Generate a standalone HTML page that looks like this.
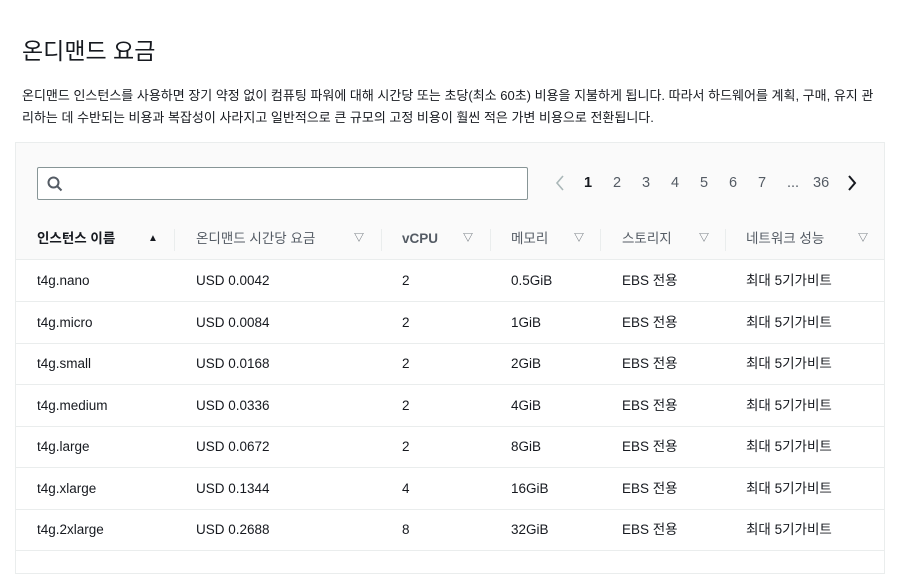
<!DOCTYPE html>
<html><head><meta charset="utf-8"><style>
body{margin:0;width:900px;height:560px;overflow:hidden;background:#fff;font-family:"Liberation Sans","Noto Sans CJK KR",sans-serif;color:#16191f;position:relative}
h1{position:absolute;left:22px;top:36px;margin:0;font-size:23px;line-height:30px;font-weight:400;color:#16191f}
.p{position:absolute;left:22px;top:85px;font-size:13px;line-height:22px;width:880px;white-space:nowrap;color:#16191f}
.box{position:absolute;left:15px;top:142px;width:868px;height:430px;border:1px solid #eaeded;background:#fff}
.top{position:absolute;left:0;top:0;width:868px;height:116px;background:#fafafa;border-bottom:1px solid #eaeded}
.search{position:absolute;left:21px;top:24px;width:489px;height:31px;border:1px solid #879596;border-radius:2px;background:#fff}
.pg{position:absolute;top:31px;font-size:14.5px;line-height:18px;color:#545b64}
.hd{position:absolute;top:87px;font-size:13.5px;line-height:18px;font-weight:bold;color:#16191f}
.ar{position:absolute;top:88px;font-size:10px;line-height:16px;color:#545b64}
.dv{position:absolute;top:86px;width:1px;height:22px;background:#eaeded}
.row{position:absolute;left:0;width:868px;border-bottom:1px solid #eaeded;height:41px}
.c{position:absolute;top:12px;font-size:13.5px;line-height:18px}
</style></head><body>
<h1>온디맨드 요금</h1>
<div class="p">온디맨드 인스턴스를 사용하면 장기 약정 없이 컴퓨팅 파워에 대해 시간당 또는 초당(최소 60초) 비용을 지불하게 됩니다. 따라서 하드웨어를 계획, 구매, 유지 관<br>리하는 데 수반되는 비용과 복잡성이 사라지고 일반적으로 큰 규모의 고정 비용이 훨씬 적은 가변 비용으로 전환됩니다.</div>
<div class="box">
<div class="top">
<div class="search"><svg width="16" height="16" style="position:absolute;left:9px;top:8px" viewBox="0 0 16 16"><circle cx="6.5" cy="6.5" r="5" fill="none" stroke="#545b64" stroke-width="2"/><path d="M10 10l4.5 4.5" stroke="#545b64" stroke-width="2"/></svg></div>
<svg style="position:absolute;left:538px;top:32px" width="12" height="16" viewBox="0 0 12 16"><path d="M9 1L3 8l6 7" fill="none" stroke="#aab7b8" stroke-width="1.6"/></svg>
<span class="pg" style="left:568px;color:#16191f;font-weight:bold">1</span>
<span class="pg" style="left:597px">2</span><span class="pg" style="left:626px">3</span><span class="pg" style="left:655px">4</span><span class="pg" style="left:684px">5</span><span class="pg" style="left:713px">6</span><span class="pg" style="left:742px">7</span><span class="pg" style="left:771px">...</span><span class="pg" style="left:797px">36</span>
<svg style="position:absolute;left:830px;top:32px" width="12" height="16" viewBox="0 0 12 16"><path d="M3 1l6 7-6 7" fill="none" stroke="#16191f" stroke-width="2"/></svg>
<span class="hd" style="left:21px">인스턴스 이름</span><span class="ar" style="left:132px;color:#16191f">▲</span><div class="dv" style="left:158px"></div>
<span class="hd" style="left:180px;font-weight:normal;color:#545b64">온디맨드 시간당 요금</span><span class="ar" style="left:338px">▽</span><div class="dv" style="left:365px"></div>
<span class="hd" style="left:386px;color:#545b64">vCPU</span><span class="ar" style="left:447px">▽</span><div class="dv" style="left:474px"></div>
<span class="hd" style="left:495px;font-weight:normal;color:#545b64">메모리</span><span class="ar" style="left:558px">▽</span><div class="dv" style="left:584px"></div>
<span class="hd" style="left:606px;font-weight:normal;color:#545b64">스토리지</span><span class="ar" style="left:683px">▽</span><div class="dv" style="left:709px"></div>
<span class="hd" style="left:730px;font-weight:normal;color:#545b64">네트워크 성능</span><span class="ar" style="left:842px">▽</span>
</div>
<div class="row" style="top:117px"><span class="c" style="left:21px">t4g.nano</span><span class="c" style="left:180px">USD 0.0042</span><span class="c" style="left:386px">2</span><span class="c" style="left:495px">0.5GiB</span><span class="c" style="left:606px">EBS 전용</span><span class="c" style="left:730px">최대 5기가비트</span></div>
<div class="row" style="top:159px"><span class="c" style="left:21px">t4g.micro</span><span class="c" style="left:180px">USD 0.0084</span><span class="c" style="left:386px">2</span><span class="c" style="left:495px">1GiB</span><span class="c" style="left:606px">EBS 전용</span><span class="c" style="left:730px">최대 5기가비트</span></div>
<div class="row" style="top:200px"><span class="c" style="left:21px">t4g.small</span><span class="c" style="left:180px">USD 0.0168</span><span class="c" style="left:386px">2</span><span class="c" style="left:495px">2GiB</span><span class="c" style="left:606px">EBS 전용</span><span class="c" style="left:730px">최대 5기가비트</span></div>
<div class="row" style="top:242px"><span class="c" style="left:21px">t4g.medium</span><span class="c" style="left:180px">USD 0.0336</span><span class="c" style="left:386px">2</span><span class="c" style="left:495px">4GiB</span><span class="c" style="left:606px">EBS 전용</span><span class="c" style="left:730px">최대 5기가비트</span></div>
<div class="row" style="top:283px"><span class="c" style="left:21px">t4g.large</span><span class="c" style="left:180px">USD 0.0672</span><span class="c" style="left:386px">2</span><span class="c" style="left:495px">8GiB</span><span class="c" style="left:606px">EBS 전용</span><span class="c" style="left:730px">최대 5기가비트</span></div>
<div class="row" style="top:325px"><span class="c" style="left:21px">t4g.xlarge</span><span class="c" style="left:180px">USD 0.1344</span><span class="c" style="left:386px">4</span><span class="c" style="left:495px">16GiB</span><span class="c" style="left:606px">EBS 전용</span><span class="c" style="left:730px">최대 5기가비트</span></div>
<div class="row" style="top:366px"><span class="c" style="left:21px">t4g.2xlarge</span><span class="c" style="left:180px">USD 0.2688</span><span class="c" style="left:386px">8</span><span class="c" style="left:495px">32GiB</span><span class="c" style="left:606px">EBS 전용</span><span class="c" style="left:730px">최대 5기가비트</span></div>
</div>
</body></html>
